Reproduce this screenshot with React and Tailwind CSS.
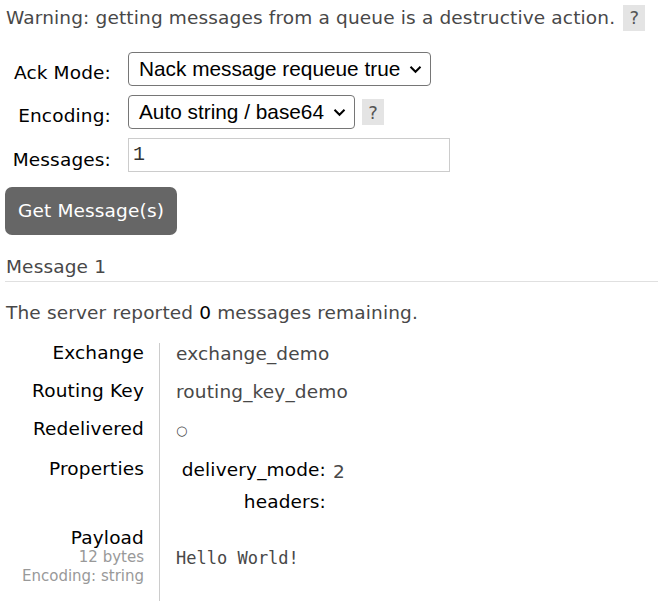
import React from "react";

function Help() {
  return (
    <span
      className="inline-flex items-center justify-center bg-[#e4e4e4] text-[#555] w-[22px] h-[26px] text-[18px] tracking-normal"
      style={{ fontFamily: '"DejaVu Sans", sans-serif' }}
    >
      ?
    </span>
  );
}

function Chevron() {
  return (
    <svg width="13" height="9" viewBox="0 0 13 9" className="shrink-0">
      <path d="M1.5 1.8 L6.5 6.8 L11.5 1.8" fill="none" stroke="#000" strokeWidth="2" />
    </svg>
  );
}

function Select({ text, width }) {
  return (
    <div
      className={
        "flex items-center justify-between h-[34px] border border-[#767676] rounded-[4px] bg-white pl-[10px] pr-[8px] text-[20.8px] text-black tracking-normal " +
        width
      }
      style={{ fontFamily: '"Liberation Sans", Arial, sans-serif' }}
    >
      <span>{text}</span>
      <Chevron />
    </div>
  );
}

export default function App() {
  return (
    <div
      className="w-[658px] h-[601px] bg-white text-[#484848] text-[18.5px] tracking-[0.15px] overflow-hidden"
      style={{ fontFamily: '"DejaVu Sans", Verdana, sans-serif' }}
    >
      <div className="flex items-center pl-[6px] pt-[5px] h-[30px] gap-[8px]">
        <span>Warning: getting messages from a queue is a destructive action.</span>
        <Help />
      </div>

      <div className="grid grid-cols-[111px_auto] items-center gap-x-[17px] gap-y-[9px] mt-[22px] w-max">
        <span className="text-right text-black leading-[20px] pt-[7px]">Ack Mode:</span>
        <Select text="Nack message requeue true" width="w-[303px]" />
        <span className="text-right text-black leading-[20px] pt-[7px]">Encoding:</span>
        <div className="flex items-center gap-[7px]">
          <Select text="Auto string / base64" width="w-[227px]" />
          <Help />
        </div>
        <span className="text-right text-black leading-[20px] pt-[9px]">Messages:</span>
        <div
          className="w-[322px] h-[34px] border border-[#ccc] flex items-center pl-[4px] text-[20px] text-[#333] tracking-normal"
          style={{ fontFamily: '"Liberation Mono", "Courier New", monospace' }}
        >
          1
        </div>
      </div>

      <div className="mt-[15px] ml-[5px]">
        <div className="inline-flex items-center justify-center w-[172px] h-[48px] bg-[#666] rounded-[7px] text-white">
          Get Message(s)
        </div>
      </div>

      <div className="mt-[18px] ml-[5px] border-b border-[#e0e0e0] pb-0">
        <div className="pl-[1px]">Message 1</div>
      </div>

      <div className="mt-[17px] ml-[6px]">
        The server reported <span className="text-black">0</span> messages remaining.
      </div>

      <div className="mt-[16px] grid grid-cols-[160px_1fr] leading-[20px]">
        <div className="border-r border-[#ccc] pr-[15px] text-right text-black flex flex-col">
          <div className="h-[38px]">Exchange</div>
          <div className="h-[38px]">Routing Key</div>
          <div className="h-[40px]">Redelivered</div>
          <div className="h-[69px]">Properties</div>
          <div className="pb-[16px]">
            <div>Payload</div>
            <div className="text-[15px] text-[#999] leading-[19px] tracking-normal">12 bytes</div>
            <div className="text-[15px] text-[#999] leading-[19px] tracking-normal">Encoding: string</div>
          </div>
        </div>
        <div className="pl-[16px] flex flex-col">
          <div className="h-[38px] pt-[1px]">exchange_demo</div>
          <div className="h-[38px] pt-[1px]">routing_key_demo</div>
          <div className="h-[40px] text-[13px] pt-[2px]">○</div>
          <div className="h-[69px] pt-[1px]">
            <div className="grid grid-cols-[150px_auto] gap-x-[7px] gap-y-[10px] text-black">
              <span className="text-right">delivery_mode:</span>
              <span className="text-[#484848] pt-[2px]">2</span>
              <span className="text-right">headers:</span>
              <span></span>
            </div>
          </div>
          <div
            className="pt-[20px] text-[17px] tracking-normal"
            style={{ fontFamily: '"DejaVu Sans Mono", monospace' }}
          >
            Hello World!
          </div>
        </div>
      </div>
    </div>
  );
}
